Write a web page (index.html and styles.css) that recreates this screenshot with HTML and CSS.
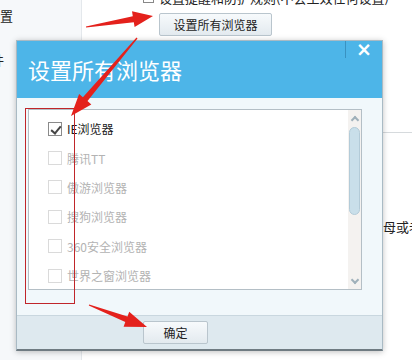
FILE: index.html
```html
<!DOCTYPE html>
<html lang="zh-CN">
<head>
  <meta charset="UTF-8" />
  <title>设置所有浏览器</title>
  <link rel="stylesheet" href="styles.css">
</head>
<body>
  <div class="sidebar">
    <div class="side-item">设置</div>
    <div class="side-item side-item-2">文件</div>
  </div>

  <div class="main">
    <div class="top-line">
      <span class="mini-box"></span>
      <span>设置提醒和防护规则(不会生效任何设置)</span>
    </div>
    <div class="top-action">
      <button class="btn">设置所有浏览器</button>
    </div>
    <div class="rule"></div>
    <p class="hint">请联系父母或老师</p>
  </div>

  <!-- modal -->
  <div class="dialog">
    <div class="dialog-head">
      <h1>设置所有浏览器</h1>
      <div class="dialog-close">×</div>
    </div>
    <div class="dialog-body">
      <div class="list-box">
        <ul class="browser-list">
          <li class="checked"><span class="cb"></span>IE浏览器</li>
          <li><span class="cb"></span>腾讯TT</li>
          <li><span class="cb"></span>傲游浏览器</li>
          <li><span class="cb"></span>搜狗浏览器</li>
          <li><span class="cb"></span>360安全浏览器</li>
          <li><span class="cb"></span>世界之窗浏览器</li>
        </ul>
        <div class="scrollbar">
          <span class="chev chev-up"></span>
          <span class="thumb"></span>
          <span class="chev chev-down"></span>
        </div>
      </div>
    </div>
    <div class="dialog-foot">
      <button class="btn btn-ok">确定</button>
    </div>
  </div>

  <!-- annotations drawn on top of the screenshot -->
  <div class="mark-box"></div>
  <svg class="arrows" width="412" height="360" viewBox="0 0 412 360">
    <polygon points="85.9,26.5 132.8,16.2 132.0,11.3 153,16 134.6,27.1 133.8,22.2 86.1,27.5" />
    <polygon points="136.5,37.6 82.9,97.3 79.1,94.0 71,116 91.3,104.4 87.5,101.1 137.5,38.4" />
    <polygon points="89.2,304.4 127.5,316.4 129.2,311.7 147,327 123.6,326.7 125.3,322.0 88.8,305.6" />
  </svg>
</body>
</html>
```

FILE: styles.css
```css
/*
  ---------------------
  PAGE
  ---------------------
*/
* {
  margin: 0;
  padding: 0;
  box-sizing: border-box;
}

body {
  width: 412px;
  height: 360px;
  overflow: hidden;
  position: relative;
  display: flex;
  background: #fff;
  font-family: "Noto Sans CJK SC", "Liberation Sans", sans-serif;
  font-size: 12px;
  color: #222;
}

.sidebar {
  width: 82px;
  flex-shrink: 0;
  background: #f6f8fa;
  border-right: 1px solid #e4e8ec;
  overflow: hidden;
}

.side-item {
  margin: 8px 0 0 -13px;
  font-size: 13px;
  line-height: 16px;
  white-space: nowrap;
}

.side-item-2 {
  margin: 28px 0 0 -22px;
}

.main {
  flex: 1;
  overflow: hidden;
  white-space: nowrap;
}

.top-line {
  display: flex;
  align-items: center;
  gap: 5px;
  margin: -11px 0 0 61px;
  height: 16px;
  font-size: 13px;
}

.mini-box {
  width: 11px;
  height: 11px;
  border: 1px solid #888;
  background: #fff;
}

.top-action {
  padding: 8px 0 0 77px;
}

.btn {
  font-family: inherit;
  font-size: 12px;
  color: #222;
  background: linear-gradient(#f7fafc, #e3eaef);
  border: 1px solid #b9c5cd;
  border-radius: 2px;
  height: 23px;
  width: 113px;
}

.rule {
  margin: 96px 0 0 0;
  height: 1px;
  background: #d6dadd;
}

.hint {
  margin: 86px 0 0 249px;
  font-size: 13px;
  line-height: 16px;
}

/*
  ---------------------
  DIALOG
  ---------------------
*/
.dialog {
  position: absolute;
  left: 16px;
  top: 40px;
  width: 367px;
  height: 311px;
  background: #f1f8fb;
  border: 1px solid #a9bac4;
  border-bottom: 2px solid #6f7b82;
  box-shadow: 0 1px 6px rgba(0, 0, 0, 0.25);
  display: flex;
  flex-direction: column;
}

.dialog-head {
  height: 57px;
  background: #4db5e8;
  position: relative;
  padding: 13px 0 0 11px;
}

.dialog-head h1 {
  font-size: 22px;
  font-weight: normal;
  color: #fff;
  line-height: 30px;
}

.dialog-close {
  position: absolute;
  top: 0;
  right: 0;
  width: 37px;
  height: 17px;
  border-left: 1px solid rgba(20, 80, 120, 0.35);
  color: #fff;
  font-family: "DejaVu Sans", sans-serif;
  font-size: 19px;
  font-weight: bold;
  line-height: 17px;
  text-align: center;
}

.dialog-body {
  height: 217px;
  padding: 11px 20px 0 11px;
}

.list-box {
  height: 181px;
  background: #fff;
  border: 1px solid #b4bfc6;
  display: flex;
}

.browser-list {
  list-style: none;
  flex: 1;
  padding: 4px 0 0 19px;
}

.browser-list li {
  height: 29.4px;
  display: flex;
  align-items: center;
  gap: 5px;
  color: #b3b3b3;
  font-size: 12px;
}

.browser-list li.checked {
  color: #1a1a1a;
}

.cb {
  width: 14px;
  height: 14px;
  border: 1px solid #dadada;
  background: #fff;
  position: relative;
}

.checked .cb {
  border-color: #8a8a8a;
}

.checked .cb::after {
  content: '';
  position: absolute;
  top: 1px;
  left: 4px;
  width: 4px;
  height: 8px;
  border: solid #444;
  border-width: 0 2px 2px 0;
  transform: rotate(40deg);
}

.scrollbar {
  width: 13px;
  background: #f4f2f0;
  display: flex;
  flex-direction: column;
  align-items: center;
  padding-top: 5px;
}

.chev {
  width: 6px;
  height: 6px;
  border: solid #9fb0ba;
  border-width: 2px 2px 0 0;
}

.chev-up {
  transform: rotate(-45deg);
  margin-top: 2px;
}

.chev-down {
  transform: rotate(135deg);
  margin-top: auto;
  margin-bottom: 6px;
}

.thumb {
  width: 11px;
  height: 88px;
  margin-top: 4px;
  border-radius: 6px;
  background: #c9dfea;
  border: 1px solid #b3cbd8;
}

.dialog-foot {
  flex: 1;
  background: #dee9ef;
  border-top: 1px solid #c9d7df;
  padding: 5px 0 0 126px;
}

.btn-ok {
  width: 65px;
  height: 23px;
}

/*
  ---------------------
  ANNOTATIONS
  ---------------------
*/
.mark-box {
  position: absolute;
  left: 25px;
  top: 108px;
  width: 50px;
  height: 196px;
  border: 1px solid #c0262a;
}

.arrows {
  position: absolute;
  left: 0;
  top: 0;
  pointer-events: none;
}

.arrows polygon {
  fill: #e4211c;
}
```
